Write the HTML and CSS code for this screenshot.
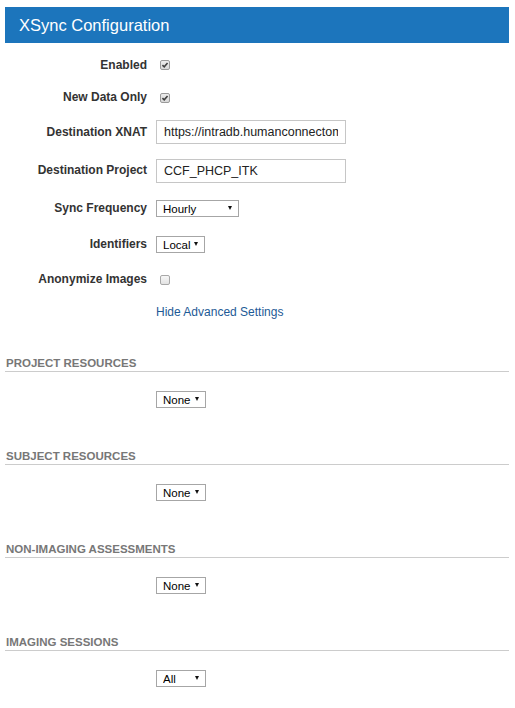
FILE: index.html
```html
<!DOCTYPE html>
<html lang="en">

<head>
    <meta charset="UTF-8">
    <meta name="viewport" content="width=device-width, initial-scale=1.0">
    <title>XSync Configuration</title>
    <link rel="stylesheet" href="styles.css">
</head>

<body>
    <div class="panel-head">
        <h1>XSync Configuration</h1>
    </div>

    <form class="settings">
        <label class="lbl">Enabled</label>
        <span class="check on">
            <svg viewBox="0 0 10 10" width="8" height="8"><path d="M1.8 5.2 4 7.3 8.2 2.4" /></svg>
        </span>

        <label class="lbl">New Data Only</label>
        <span class="check on">
            <svg viewBox="0 0 10 10" width="8" height="8"><path d="M1.8 5.2 4 7.3 8.2 2.4" /></svg>
        </span>

        <label class="lbl">Destination XNAT</label>
        <input class="text" type="text" value="https://intradb.humanconnectome.org">

        <label class="lbl">Destination Project</label>
        <input class="text" type="text" value="CCF_PHCP_ITK">

        <label class="lbl">Sync Frequency</label>
        <span class="select w-freq">
            <select>
                <option>Hourly</option>
                <option>Daily</option>
                <option>Weekly</option>
                <option>Monthly</option>
            </select>
        </span>

        <label class="lbl">Identifiers</label>
        <span class="select w-ids">
            <select>
                <option>Local</option>
                <option>Remote</option>
            </select>
        </span>

        <label class="lbl">Anonymize Images</label>
        <span class="check"></span>

        <a class="toggle" href="#">Hide Advanced Settings</a>
    </form>

    <div class="groups">
        <section class="group">
            <h2>Project Resources</h2>
            <div class="pick">
                <span class="select w-small"><select><option>None</option><option>All</option></select></span>
            </div>
        </section>
        <section class="group">
            <h2>Subject Resources</h2>
            <div class="pick">
                <span class="select w-small"><select><option>None</option><option>All</option></select></span>
            </div>
        </section>
        <section class="group">
            <h2>Non-Imaging Assessments</h2>
            <div class="pick">
                <span class="select w-small"><select><option>None</option><option>All</option></select></span>
            </div>
        </section>
        <section class="group">
            <h2>Imaging Sessions</h2>
            <div class="pick">
                <span class="select w-small"><select><option>All</option><option>None</option></select></span>
            </div>
        </section>
    </div>
</body>

</html>
```

FILE: styles.css
```css
body {
    margin: 7px 6px 0 5px;
    font-family: Arial, "Liberation Sans", sans-serif;
    font-size: 12px;
    color: #333;
    background: #fff;
}

.panel-head {
    display: flex;
    align-items: center;
    height: 36px;
    padding-left: 14px;
    background: #1c75bc;
}

.panel-head h1 {
    margin: 0;
    font-size: 16.5px;
    font-weight: normal;
    color: #fff;
}

/* label / control grid */
.settings {
    display: grid;
    grid-template-columns: 142px 1fr;
    grid-template-rows: 32px 33px 36px 41px 35px 37px 33px 33px;
    column-gap: 9px;
    align-items: center;
    padding-top: 6px;
}

.lbl {
    text-align: right;
    font-weight: bold;
    line-height: 17px;
    color: #333;
}

.check {
    display: flex;
    align-items: center;
    justify-content: center;
    width: 8px;
    height: 8px;
    margin-left: 4px;
    border: 1px solid #a8a8a8;
    border-radius: 2px;
    background: linear-gradient(#f7f7f7, #e3e3e3);
}

.check.on {
    background: linear-gradient(#ececec, #d8d8d8);
    border-color: #9a9a9a;
}

.check svg path {
    fill: none;
    stroke: #404040;
    stroke-width: 2;
}

.text {
    box-sizing: border-box;
    width: 190px;
    height: 24px;
    margin: 0;
    padding: 0 7px;
    border: 1px solid #c6c6c6;
    border-radius: 0;
    font-family: Arial, "Liberation Sans", sans-serif;
    font-size: 12.5px;
    color: #222;
    outline: none;
}

.select {
    position: relative;
    display: inline-block;
    height: 17px;
}

.select select {
    -webkit-appearance: none;
    appearance: none;
    box-sizing: border-box;
    width: 100%;
    height: 17px;
    margin: 0;
    padding: 1px 0 0 6px;
    border: 1px solid #a6a6a6;
    border-radius: 0;
    background: #fff;
    font-family: Arial, "Liberation Sans", sans-serif;
    font-size: 11.5px;
    color: #000;
    outline: none;
}

.select:after {
    content: '';
    position: absolute;
    right: 7px;
    top: 6px;
    border-left: 2.5px solid transparent;
    border-right: 2.5px solid transparent;
    border-top: 4px solid #111;
    pointer-events: none;
}

.w-freq {
    width: 83px;
}

.w-ids {
    width: 49px;
}

.w-small {
    width: 50px;
}

.toggle {
    grid-column: 2;
    color: #1d5a96;
    text-decoration: none;
    line-height: 17px;
}

/* advanced sections */
.groups {
    margin-top: 27px;
}

.group + .group {
    margin-top: 41px;
}

.group h2 {
    margin: 0;
    padding: 0 0 1px 1px;
    border-bottom: 1px solid #ccc;
    font-size: 11.5px;
    line-height: 14px;
    font-weight: bold;
    text-transform: uppercase;
    color: #777;
}

.pick {
    margin: 19px 0 0 151px;
    height: 17px;
}
```
